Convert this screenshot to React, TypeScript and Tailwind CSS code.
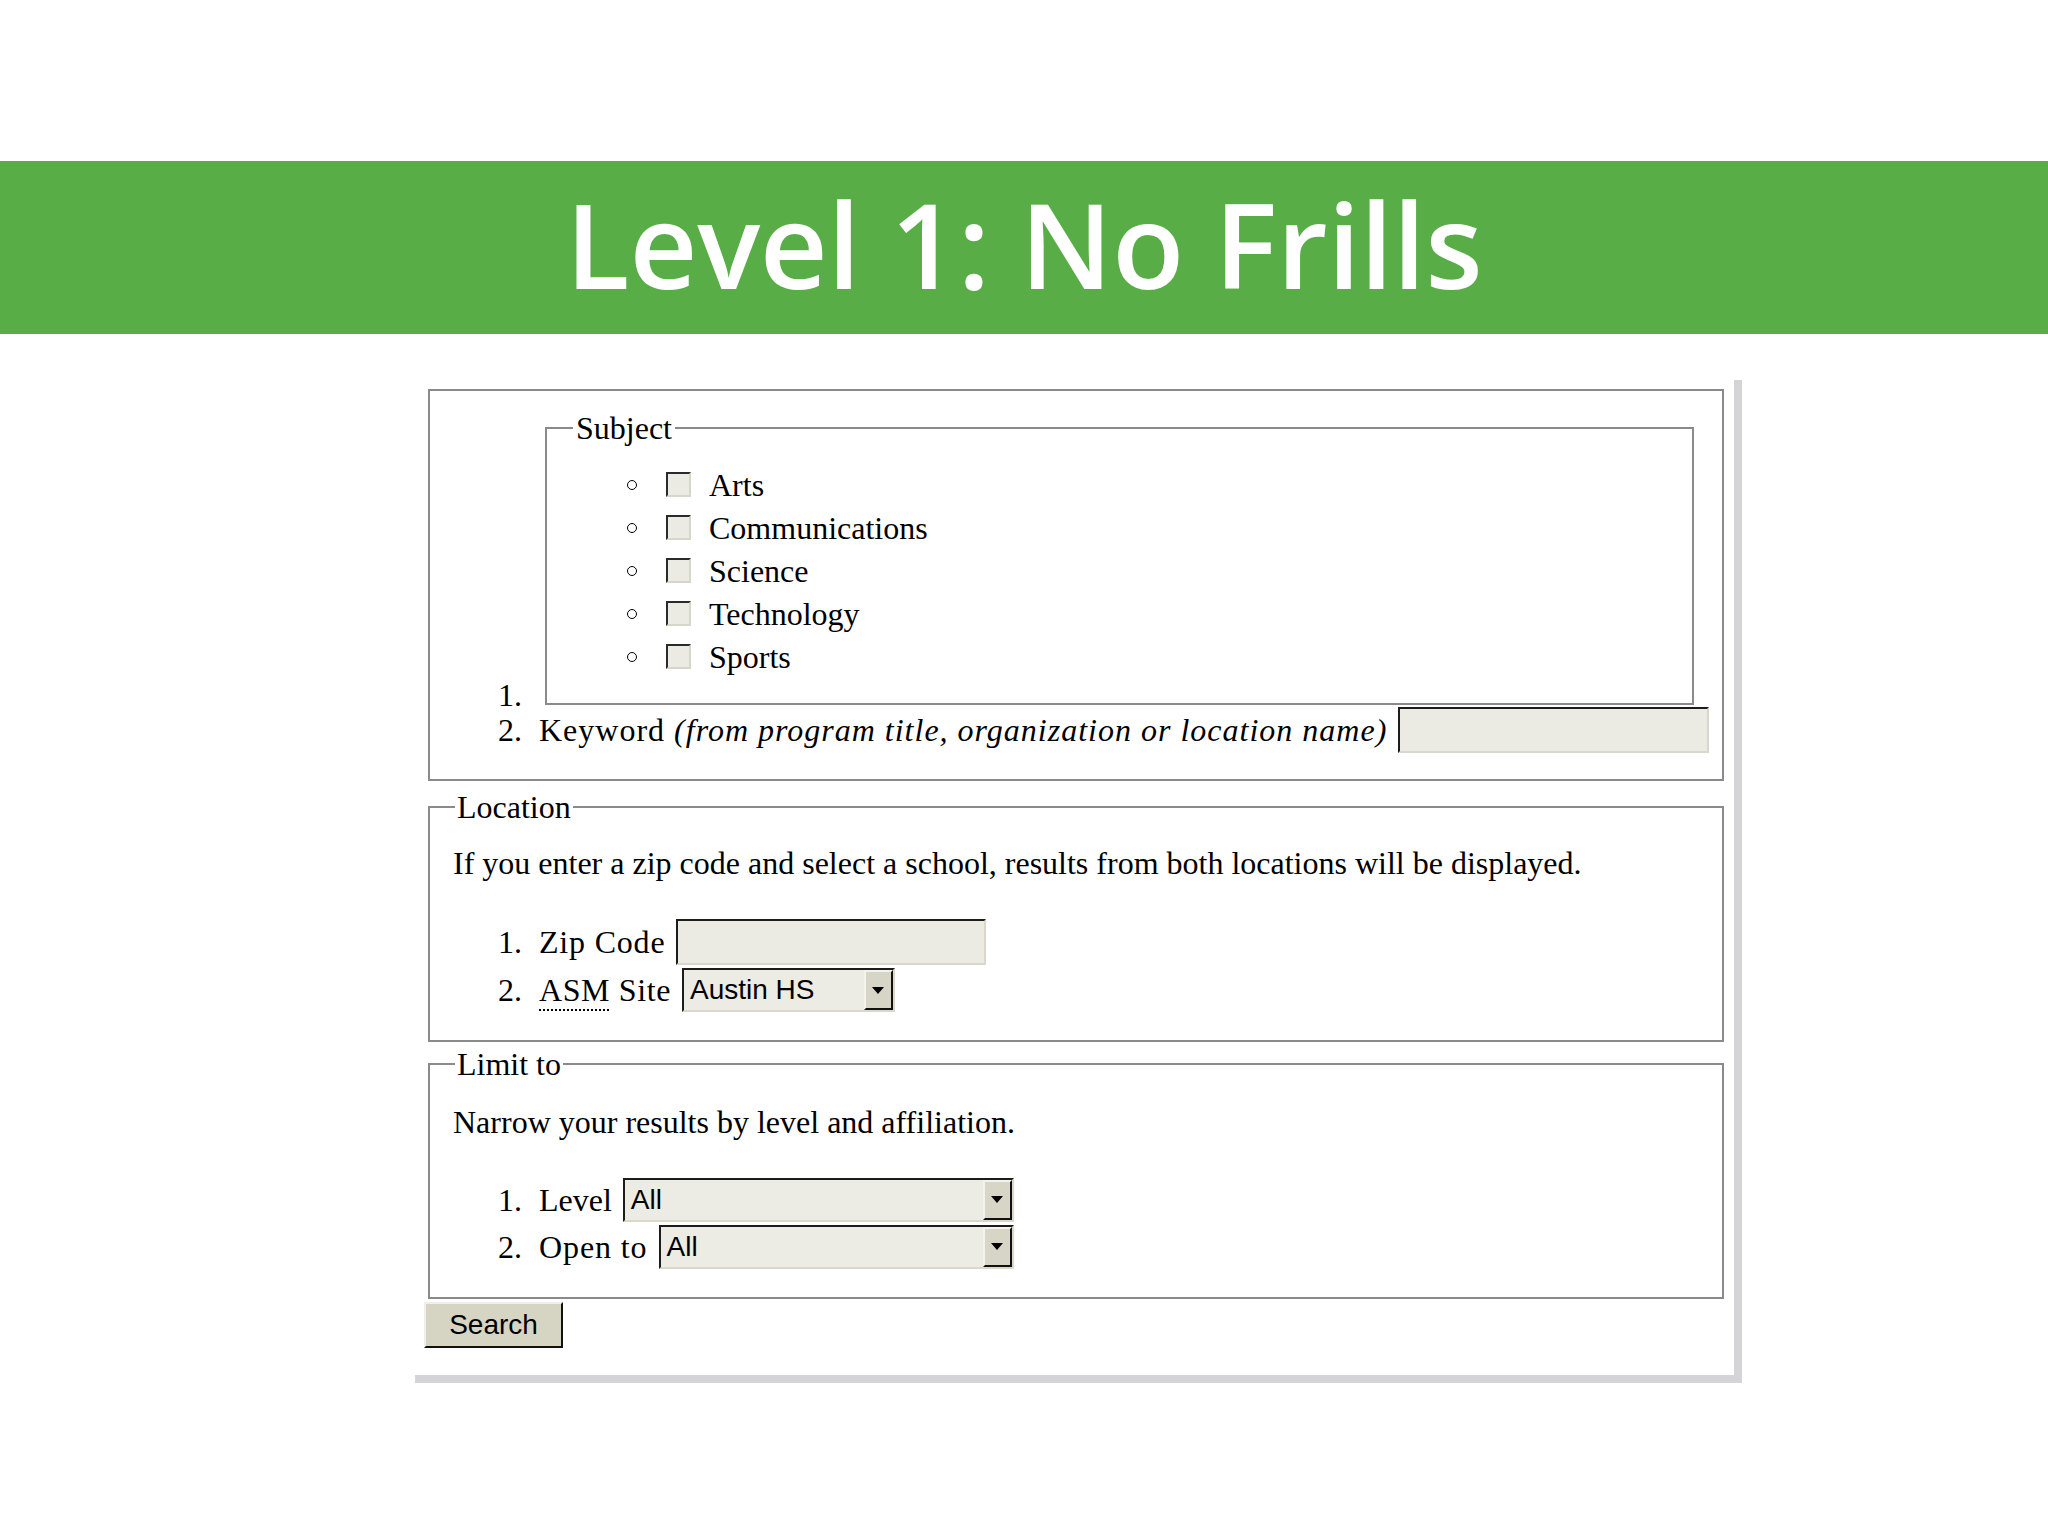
import React from "react";

const serif = "font-['Liberation_Serif','Times_New_Roman',serif]";
const sans = "font-['Liberation_Sans',Arial,sans-serif]";

function Arrow() {
  return (
    <svg width="12" height="7" viewBox="0 0 12 7">
      <path d="M0 0 H12 L6 7 Z" fill="#000" />
    </svg>
  );
}

function Select({ value, width }: { value: string; width: string }) {
  return (
    <div
      className={`flex h-[44px] ${width} border-2 border-t-[#1c1c1c] border-l-[#1c1c1c] border-r-[#d9d8ca] border-b-[#d9d8ca] bg-[#ecebe4]`}
    >
      <span className={`flex-1 pl-[6px] ${sans} text-[28px] leading-[40px] text-black`}>{value}</span>
      <div className="w-[29px] flex items-center justify-center bg-[#d6d5c6] border-2 border-t-[#f3f3ec] border-l-[#f3f3ec] border-r-[#111] border-b-[#111]">
        <Arrow />
      </div>
    </div>
  );
}

function TextInput({ width }: { width: string }) {
  return (
    <div
      className={`h-[46px] ${width} border-2 border-t-[#1c1c1c] border-l-[#1c1c1c] border-r-[#d9d8ca] border-b-[#d9d8ca] bg-[#ebebe4]`}
    />
  );
}

function Checkbox() {
  return (
    <div className="w-[25px] h-[25px] border-2 border-t-[#2a2a2a] border-l-[#2a2a2a] border-r-[#d6d6ca] border-b-[#d6d6ca] bg-[#ebebe4]" />
  );
}

const subjects = ["Arts", "Communications", "Science", "Technology", "Sports"];

export default function App() {
  return (
    <div className={`w-[2048px] h-[1536px] bg-white text-black ${serif} text-[32px] overflow-hidden`}>
      <div className="mt-[161px] h-[173px] bg-[#58ad46] flex items-center justify-center pb-[8px]">
        <h1 className="font-['Open_Sans',sans-serif] font-semibold text-white text-[118px] leading-none tracking-[-0.3px]">
          Level 1: No Frills
        </h1>
      </div>

      <div className="ml-[415px] mt-[46px] w-[1327px] h-[1003px] border-r-[8px] border-b-[8px] border-[#d4d4d6] pt-[9px] pl-[9px]">
        {/* Box 1 */}
        <div className="ml-[4px] w-[1296px] border-2 border-[#8a8a8a] pt-[19px] pb-[24px] pl-[68px]">
          <div className="flex items-end">
            <span className="w-[41px] leading-[36px] -mb-[8px]">1.</span>
            <fieldset className="ml-[6px] w-[1149px] border-2 border-[#8a8a8a] pt-[17px] pb-[25px]">
              <legend className="ml-[26px] px-[3px] leading-[36px]">Subject</legend>
              {subjects.map((s) => (
                <div key={s} className="flex items-center h-[43px]">
                  <span className="ml-[80px] w-[10px] h-[10px] rounded-full border-[1.5px] border-black" />
                  <span className="ml-[29px]">
                    <Checkbox />
                  </span>
                  <span className="ml-[18px] leading-[36px]">{s}</span>
                </div>
              ))}
            </fieldset>
          </div>
          <div className="flex items-center h-[50px]">
            <span className="w-[41px] leading-[36px]">2.</span>
            <span className="leading-[36px] tracking-[1px]">
              Keyword <i>(from program title, organization or location name)</i>
            </span>
            <span className="ml-[11px]">
              <TextInput width="w-[311px]" />
            </span>
          </div>
        </div>

        {/* Location */}
        <fieldset className="mt-[8px] ml-[4px] w-[1296px] border-2 border-[#8a8a8a] pb-[26px]">
          <legend className="ml-[25px] px-[2px] leading-[36px]">Location</legend>
          <p className="mt-[20px] pl-[23px] leading-[36px]">
            If you enter a zip code and select a school, results from both locations will be displayed.
          </p>
          <div className="mt-[37px] pl-[68px]">
            <div className="flex items-center h-[48px]">
              <span className="w-[41px] leading-[36px]">1.</span>
              <span className="leading-[36px] tracking-[0.8px]">Zip Code</span>
              <span className="ml-[11px]">
                <TextInput width="w-[310px]" />
              </span>
            </div>
            <div className="flex items-center h-[48px]">
              <span className="w-[41px] leading-[36px]">2.</span>
              <span className="leading-[36px] tracking-[0.6px]">
                <span className="underline decoration-dotted decoration-[2px] underline-offset-[8px]">ASM</span> Site
              </span>
              <span className="ml-[11px]">
                <Select value="Austin HS" width="w-[213px]" />
              </span>
            </div>
          </div>
        </fieldset>

        {/* Limit to */}
        <fieldset className="mt-[4px] ml-[4px] w-[1296px] border-2 border-[#8a8a8a] pb-[27px]">
          <legend className="ml-[25px] px-[2px] leading-[36px]">Limit to</legend>
          <p className="mt-[22px] pl-[23px] leading-[36px]">Narrow your results by level and affiliation.</p>
          <div className="mt-[36px] pl-[68px]">
            <div className="flex items-center h-[47px]">
              <span className="w-[41px] leading-[36px]">1.</span>
              <span className="leading-[36px]">Level</span>
              <span className="ml-[11px]">
                <Select value="All" width="w-[391px]" />
              </span>
            </div>
            <div className="flex items-center h-[47px]">
              <span className="w-[41px] leading-[36px]">2.</span>
              <span className="leading-[36px] tracking-[0.9px]">Open to</span>
              <span className="ml-[11px]">
                <Select value="All" width="w-[355px]" />
              </span>
            </div>
          </div>
        </fieldset>

        <button
          className={`mt-[3px] w-[139px] h-[46px] ${sans} text-[28px] text-black bg-[#d6d5c3] border-2 border-t-[#f0f0e8] border-l-[#f0f0e8] border-r-[#111] border-b-[#111] flex items-center justify-center`}
        >
          Search
        </button>
      </div>
    </div>
  );
}
